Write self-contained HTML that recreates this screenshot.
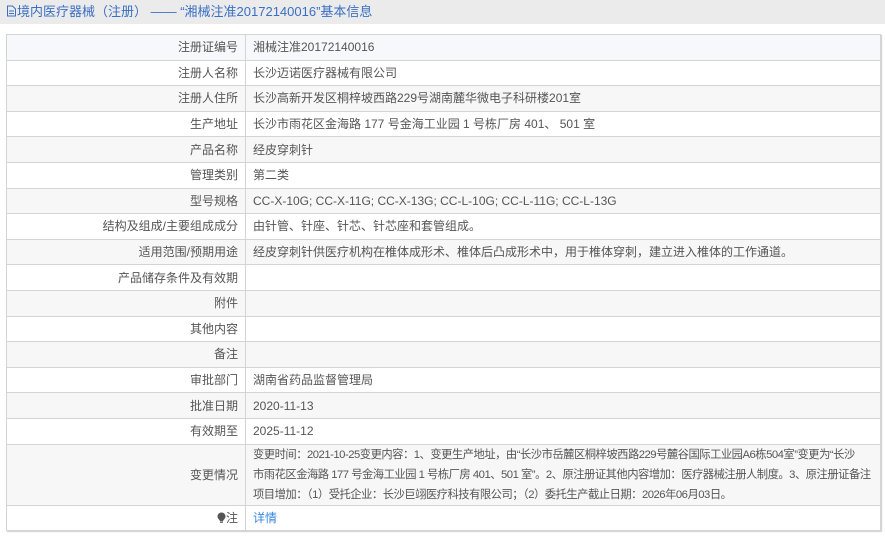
<!DOCTYPE html>
<html><head><meta charset="utf-8">
<style>
html,body{margin:0;padding:0;background:#fff;width:885px;height:541px;overflow:hidden;font-family:"Liberation Sans","Noto Sans CJK SC",sans-serif;}
.hd{position:absolute;left:0;top:0;width:885px;height:24px;background:#ebebeb;color:#3a6fc4;font-size:13px;line-height:23px;padding-left:6px;box-sizing:border-box;}
table{position:absolute;left:6px;top:34px;width:875px;border-collapse:collapse;font-size:12px;color:#555;box-shadow:1px 1px 1px #ccc;table-layout:fixed;}
td{border:1px solid #d4d4d4;height:25.6px;padding:0 7px;box-sizing:border-box;line-height:18px;overflow:hidden;}
td.l{width:239px;text-align:right;}
tr:nth-child(odd) td{background:#f7f7f7;}
tr:first-child td{background:#f6f8fb;}
tr.tall td{height:60px;line-height:20px;}
.ch{font-size:11.3px;letter-spacing:-0.5px;white-space:nowrap;}
a{color:#3a88e0;text-decoration:none;}
</style></head><body>
<div class="hd"><svg width="11" height="12" viewBox="0 0 11 12" style="vertical-align:-1px"><path d="M1.5 1h5l3 3v7h-8z" fill="none" stroke="#3a6fc4"/><path d="M3 6h5M3 8.5h5" stroke="#3a6fc4"/></svg>境内医疗器械（注册） ——  “湘械注准20172140016”基本信息</div>
<table>
<tr><td class="l">注册证编号</td><td>湘械注准20172140016</td></tr>
<tr><td class="l">注册人名称</td><td>长沙迈诺医疗器械有限公司</td></tr>
<tr><td class="l">注册人住所</td><td>长沙高新开发区桐梓坡西路229号湖南麓华微电子科研楼201室</td></tr>
<tr><td class="l">生产地址</td><td>长沙市雨花区金海路 177 号金海工业园 1 号栋厂房 401、 501 室</td></tr>
<tr><td class="l">产品名称</td><td>经皮穿刺针</td></tr>
<tr><td class="l">管理类别</td><td>第二类</td></tr>
<tr><td class="l">型号规格</td><td>CC-X-10G; CC-X-11G; CC-X-13G; CC-L-10G; CC-L-11G; CC-L-13G</td></tr>
<tr><td class="l">结构及组成/主要组成成分</td><td>由针管、针座、针芯、针芯座和套管组成。</td></tr>
<tr><td class="l">适用范围/预期用途</td><td>经皮穿刺针供医疗机构在椎体成形术、椎体后凸成形术中，用于椎体穿刺，建立进入椎体的工作通道。</td></tr>
<tr><td class="l">产品储存条件及有效期</td><td></td></tr>
<tr><td class="l">附件</td><td></td></tr>
<tr><td class="l">其他内容</td><td></td></tr>
<tr><td class="l">备注</td><td></td></tr>
<tr><td class="l">审批部门</td><td>湖南省药品监督管理局</td></tr>
<tr><td class="l">批准日期</td><td>2020-11-13</td></tr>
<tr><td class="l">有效期至</td><td>2025-11-12</td></tr>
<tr class="tall"><td class="l">变更情况</td><td class="ch">变更时间：2021-10-25变更内容：1、变更生产地址，由“长沙市岳麓区桐梓坡西路229号麓谷国际工业园A6栋504室”变更为“长沙<br>市雨花区金海路 177 号金海工业园 1 号栋厂房 401、501 室”。2、原注册证其他内容增加：医疗器械注册人制度。3、原注册证备注<br>项目增加：（1）受托企业：长沙巨翊医疗科技有限公司；（2）委托生产截止日期：2026年06月03日。</td></tr>
<tr><td class="l"><svg width="9" height="11" viewBox="0 0 9 11" style="vertical-align:-1px"><path d="M4.5 0.5a4 4 0 0 1 4 4c0 2-2 3-2.5 4.5h-3C2.5 7.5 0.5 6.5 0.5 4.5a4 4 0 0 1 4-4z" fill="#555"/><rect x="3" y="9.5" width="3" height="1.3" fill="#555"/></svg>注</td><td><a>详情</a></td></tr>
</table>
</body></html>
